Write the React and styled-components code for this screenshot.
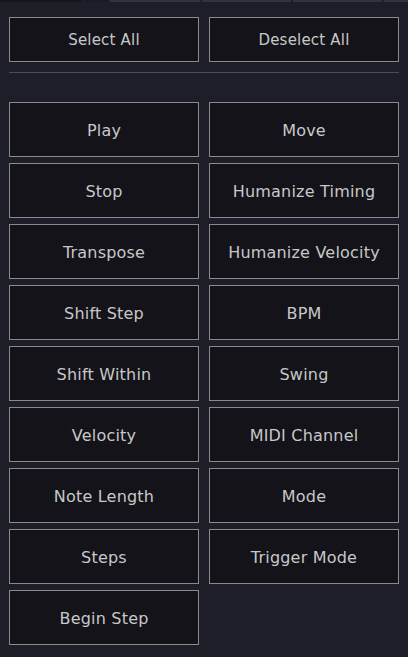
import React from "react";
import styled, { createGlobalStyle } from "styled-components";

const GlobalStyle = createGlobalStyle`
  html, body {
    margin: 0;
    padding: 0;
    background: #1e1e28;
  }
  body {
    font-family: "DejaVu Sans", Verdana, sans-serif;
  }
`;

const tabs = [
  { w: 82, c: "#15151b" },
  { w: 24, c: "#1b1b23" },
  { w: 90, c: "#33333f" },
  { w: 89, c: "#33333f" },
  { w: 89, c: "#33333f" },
  { w: 28, c: "#33333f" },
];

const actions = [
  "Play",
  "Move",
  "Stop",
  "Humanize Timing",
  "Transpose",
  "Humanize Velocity",
  "Shift Step",
  "BPM",
  "Shift Within",
  "Swing",
  "Velocity",
  "MIDI Channel",
  "Note Length",
  "Mode",
  "Steps",
  "Trigger Mode",
  "Begin Step",
];

export default function App() {
  return (
    <>
      <GlobalStyle />
      <Page>
        <TabStrip>
          {tabs.map((t, i) => (
            <Tab key={i} $w={t.w} $c={t.c} />
          ))}
        </TabStrip>
        <Content>
          <TopRow>
            <Button $h={45} $size={15}>Select All</Button>
            <Button $h={45} $size={15}>Deselect All</Button>
          </TopRow>
          <Divider />
          <Grid>
            {actions.map((name) => (
              <Button key={name} $h={55} $size={16}>
                {name}
              </Button>
            ))}
          </Grid>
        </Content>
      </Page>
    </>
  );
}

const Page = styled.div`
  width: 408px;
  min-height: 657px;
  background: #1e1e28;
  display: flex;
  flex-direction: column;
`;

const TabStrip = styled.div`
  display: flex;
  gap: 2px;
  height: 2px;
  overflow: hidden;
`;

const Tab = styled.div`
  flex: 0 0 ${({ $w }) => $w}px;
  background: ${({ $c }) => $c};
`;

const Content = styled.div`
  padding: 15px 9px 0 9px;
  display: flex;
  flex-direction: column;
`;

const TopRow = styled.div`
  display: grid;
  grid-template-columns: 1fr 1fr;
  gap: 10px;
`;

const Divider = styled.div`
  height: 1px;
  background: #4a4a5a;
  margin: 10px 0 29px 0;
`;

const Grid = styled.div`
  display: grid;
  grid-template-columns: 1fr 1fr;
  column-gap: 10px;
  row-gap: 6px;
`;

const Button = styled.button`
  height: ${({ $h }) => $h}px;
  background: #131319;
  border: 1px solid #8a8a8e;
  border-radius: 0;
  color: #c8c8c8;
  font-family: "DejaVu Sans", Verdana, sans-serif;
  font-size: ${({ $size }) => $size}px;
  letter-spacing: 0.2px;
  padding: 1px 0 0 0;
  display: flex;
  align-items: center;
  justify-content: center;
  cursor: pointer;
`;
